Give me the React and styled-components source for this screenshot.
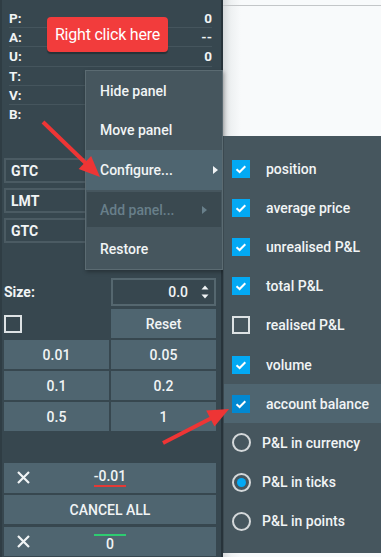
import React from "react";
import styled, { createGlobalStyle } from "styled-components";

const GlobalStyle = createGlobalStyle`
  html, body { margin: 0; padding: 0; }
  body {
    background: #f8fafb;
    font-family: Roboto, "Liberation Sans", sans-serif;
  }
`;

const Page = styled.div`
  position: relative;
  display: flex;
  width: 381px;
  height: 557px;
  overflow: hidden;
`;

const Panel = styled.div`
  box-sizing: border-box;
  width: 223px;
  flex: none;
  display: flex;
  flex-direction: column;
  padding: 9px 5px 0 2px;
  background: #37474f;
  border-left: 2px solid #2f3d44;
  border-right: 2px solid #27333a;
  color: #f1f4f5;
  font-size: 14px;
  font-weight: 500;
`;

const RightPane = styled.div`
  flex: 1;
  background: linear-gradient(to right, #d6d9db 0, #eef1f2 8px, #f8fafb 18px);
`;

const TopRule = styled.div`
  margin-top: 5px;
  height: 1px;
  background: #c3c6c8;
`;

const Stats = styled.div`
  margin: 0 4px 0 5px;
`;

const StatRow = styled.div`
  box-sizing: border-box;
  height: 19.2px;
  display: flex;
  align-items: center;
  justify-content: space-between;
  border-bottom: 1px solid ${p => (p.last ? "transparent" : "#45555d")};
  font-size: 13.5px;
  font-weight: 700;
`;

const Badge = styled.div`
  position: absolute;
  left: 47px;
  top: 17px;
  width: 121px;
  height: 35px;
  display: flex;
  align-items: center;
  justify-content: center;
  background: #f23c3c;
  border-radius: 4px;
  box-shadow: 0 2px 1px rgba(0, 0, 0, 0.3);
  color: #fff;
  font-size: 16px;
  font-weight: 400;
  letter-spacing: -0.2px;
`;

const Dropdowns = styled.div`
  margin-top: 34px;
  display: flex;
  flex-direction: column;
  gap: 5px;
`;

const Dropdown = styled.div`
  box-sizing: border-box;
  height: 25px;
  display: flex;
  align-items: center;
  padding-left: 5px;
  border: 2px solid #4b5b63;
  font-weight: 700;
`;

const Grid = styled.div`
  display: grid;
  grid-template-columns: 105px 105px;
  column-gap: 2px;
  row-gap: 2px;
  margin-top: ${p => p.mt}px;
  align-items: center;
`;

const SizeLabel = styled.div`
  font-weight: 700;
`;

const SizeInput = styled.div`
  box-sizing: border-box;
  height: 28px;
  display: flex;
  align-items: center;
  justify-content: flex-end;
  padding-right: 5px;
  border: 2px solid #55676f;
  font-weight: 500;
  svg { margin-left: 13px; }
`;

const EmptyBox = styled.div`
  box-sizing: border-box;
  width: 18px;
  height: 18px;
  border: 2px solid #dde2e4;
`;

const Button = styled.div`
  height: 29px;
  display: flex;
  align-items: center;
  justify-content: center;
  background: #4f6570;
  font-weight: 500;
`;

const Orders = styled.div`
  margin-top: 32px;
  display: flex;
  flex-direction: column;
  gap: 2.5px;
`;

const OrderRow = styled.div`
  height: 29.5px;
  display: grid;
  grid-template-columns: 38px 1fr 38px;
  align-items: center;
  justify-items: center;
  background: #4f6570;
`;

const Qty = styled.div`
  display: flex;
  flex-direction: ${p => (p.lineTop ? "column-reverse" : "column")};
  align-items: center;
  gap: 1px;
  line-height: 15px;
  margin-top: ${p => (p.lineTop ? 3 : 0)}px;
  &::after {
    content: "";
    width: 32px;
    height: 2px;
    background: ${p => p.lineColor};
  }
`;

const Menu = styled.div`
  position: absolute;
  left: 85px;
  top: 70px;
  width: 138px;
  box-sizing: border-box;
  background: #46565e;
  border: 1px solid #5b6b72;
  box-shadow: 1px 2px 4px rgba(0, 0, 0, 0.3);
  color: #f1f4f5;
  font-size: 14px;
  font-weight: 500;
`;

const MenuItem = styled.div`
  box-sizing: border-box;
  height: ${p => (p.disabled ? 35 : 39.5)}px;
  margin: ${p => (p.disabled ? "2.5px 1px 2px 1px" : "0")};
  display: flex;
  align-items: center;
  justify-content: space-between;
  padding: 0 ${p => (p.disabled ? 14 : 4)}px 0 ${p => (p.disabled ? 13 : 14)}px;
  background: ${p => (p.active ? "#4f6570" : p.disabled ? "#3a4950" : "transparent")};
  color: ${p => (p.disabled ? "#687f8a" : "inherit")};
`;

const SubMenu = styled.div`
  position: absolute;
  left: 223px;
  top: 136px;
  width: 158px;
  height: 417px;
  box-sizing: border-box;
  padding: 13px 0;
  background: #46565e;
  border-left: 1px solid #3b4950;
  color: #f1f4f5;
  font-size: 14px;
  font-weight: 500;
`;

const Option = styled.div`
  height: 39.2px;
  display: flex;
  align-items: center;
  gap: ${p => (p.radio ? 11 : 16)}px;
  padding-left: 8px;
  background: ${p => (p.active ? "#4f6570" : "transparent")};
`;

const CheckBox = styled.div`
  box-sizing: border-box;
  width: 18px;
  height: 18px;
  display: flex;
  align-items: center;
  justify-content: center;
  background: ${p => (p.checked ? p.tone : "transparent")};
  border: ${p => (p.checked ? "none" : "2px solid #dde2e4")};
`;

const Radio = styled.div`
  box-sizing: border-box;
  width: 19px;
  height: 19px;
  border-radius: 50%;
  border: 2px solid #d4d8da;
  display: flex;
  align-items: center;
  justify-content: center;
  &::after {
    content: "";
    width: 9px;
    height: 9px;
    border-radius: 50%;
    background: ${p => (p.on ? "#03a9f4" : "transparent")};
  }
`;

const Overlay = styled.svg`
  position: absolute;
  left: 0;
  top: 0;
  pointer-events: none;
`;

const Caret = ({ color }) => (
  <svg width="5" height="8" viewBox="0 0 5 8">
    <path d="M0 0 L5 4 L0 8 Z" fill={color} />
  </svg>
);

const Spinner = () => (
  <svg width="8" height="16" viewBox="0 0 8 16">
    <path d="M0.5 5.5 L4 1.5 L7.5 5.5 Z M0.5 10.5 L4 14.5 L7.5 10.5 Z" fill="#f1f4f5" />
  </svg>
);

const Cross = () => (
  <svg width="13" height="13" viewBox="0 0 13 13">
    <path d="M1 1 L12 12 M12 1 L1 12" stroke="#f1f4f5" strokeWidth="2.2" />
  </svg>
);

const Tick = () => (
  <svg width="18" height="18" viewBox="0 0 18 18">
    <path d="M4.5 9.2 L7.6 12 L13.3 6.2" stroke="#fff" strokeWidth="2" fill="none" />
  </svg>
);

const Arrow = ({ x1, y1, x2, y2 }) => {
  const dx = x2 - x1;
  const dy = y2 - y1;
  const len = Math.hypot(dx, dy);
  const ux = dx / len;
  const uy = dy / len;
  const bx = x2 - ux * 21;
  const by = y2 - uy * 21;
  const w = 9;
  const pts = `${x2},${y2} ${bx - uy * w},${by + ux * w} ${bx + uy * w},${by - ux * w}`;
  return (
    <g>
      <line x1={x1} y1={y1} x2={bx + ux * 2} y2={by + uy * 2} stroke="#ee3535" strokeWidth="4" />
      <polygon points={pts} fill="#ee3535" />
    </g>
  );
};

const stats = [
  ["P:", "0"],
  ["A:", "--"],
  ["U:", "0"],
  ["T:", ""],
  ["V:", ""],
  ["B:", ""],
];

const checks = [
  ["position", true],
  ["average price", true],
  ["unrealised P&L", true],
  ["total P&L", true],
  ["realised P&L", false],
  ["volume", true],
  ["account balance", true, true],
];

const radios = [
  ["P&L in currency", false],
  ["P&L in ticks", true],
  ["P&L in points", false],
];

const App = () => (
  <>
    <GlobalStyle />
    <Page>
      <Panel>
        <Stats>
          {stats.map(([k, v], i) => (
            <StatRow key={k} last={i === stats.length - 1}>
              <span>{k}</span>
              <span>{v}</span>
            </StatRow>
          ))}
        </Stats>
        <Dropdowns>
          <Dropdown>GTC</Dropdown>
          <Dropdown>LMT</Dropdown>
          <Dropdown>GTC</Dropdown>
        </Dropdowns>
        <Grid mt={35}>
          <SizeLabel>Size:</SizeLabel>
          <SizeInput>
            0.0
            <Spinner />
          </SizeInput>
        </Grid>
        <Grid mt={3}>
          <EmptyBox />
          <Button>Reset</Button>
        </Grid>
        <Grid mt={2}>
          {["0.01", "0.05", "0.1", "0.2", "0.5", "1"].map(n => (
            <Button key={n}>{n}</Button>
          ))}
        </Grid>
        <Orders>
          <OrderRow>
            <Cross />
            <Qty lineColor="#e53935">-0.01</Qty>
            <span />
          </OrderRow>
          <Button>CANCEL ALL</Button>
          <OrderRow>
            <Cross />
            <Qty lineTop lineColor="#2ecc71">0</Qty>
            <span />
          </OrderRow>
        </Orders>
      </Panel>
      <RightPane>
        <TopRule />
      </RightPane>

      <Badge>Right click here</Badge>

      <Menu>
        <MenuItem>Hide panel</MenuItem>
        <MenuItem>Move panel</MenuItem>
        <MenuItem active>
          Configure...
          <Caret color="#f1f4f5" />
        </MenuItem>
        <MenuItem disabled>
          Add panel...
          <Caret color="#687f8a" />
        </MenuItem>
        <MenuItem>Restore</MenuItem>
      </Menu>

      <SubMenu>
        {checks.map(([label, on, hover]) => (
          <Option key={label} active={hover}>
            <CheckBox checked={on} tone={hover ? "#0288d1" : "#03a9f4"}>
              {on && <Tick />}
            </CheckBox>
            {label}
          </Option>
        ))}
        {radios.map(([label, on]) => (
          <Option key={label} radio>
            <Radio on={on} />
            {label}
          </Option>
        ))}
      </SubMenu>

      <Overlay width="381" height="557">
        <Arrow x1={43} y1={122} x2={100} y2={177} />
        <Arrow x1={163} y1={443} x2={229} y2={409} />
      </Overlay>
    </Page>
  </>
);

export default App;
